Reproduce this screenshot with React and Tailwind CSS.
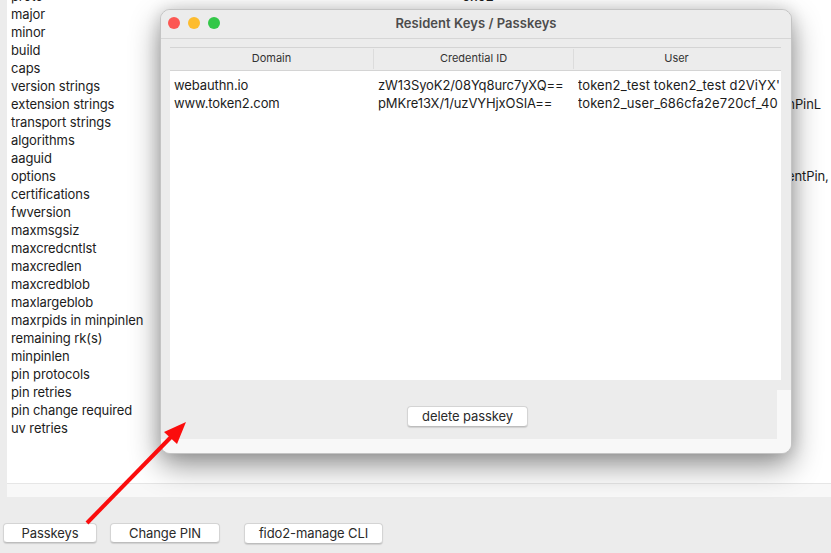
const labels = ["proto","major","minor","build","caps","version strings","extension strings","transport strings","algorithms","aaguid","options","certifications","fwversion","maxmsgsiz","maxcredcntlst","maxcredlen","maxcredblob","maxlargeblob","maxrpids in minpinlen","remaining rk(s)","minpinlen","pin protocols","pin retries","pin change required","uv retries"];

const font = { fontFamily: '"Inter", "Liberation Sans", sans-serif' };

function Btn({ className, children }) {
  return (
    <button className={`flex items-center justify-center bg-white rounded-[4px] border border-[#d4d4d4] border-b-[#bdbdbd] text-[13px] leading-none text-[#2a2a2a] shadow-[0_1px_1px_rgba(0,0,0,0.12)] ${className}`}>
      {children}
    </button>
  );
}

export default function App() {
  return (
    <div className="relative w-[831px] h-[553px] overflow-hidden bg-[#ececec] text-[#1c1c1c] text-[13px] tracking-[-0.1px]" style={font}>
      {/* main window */}
      <div className="flex flex-col h-[497px] ml-[7px]">
        <div className="relative flex-1 bg-white -mt-[13px] pl-[4px] overflow-hidden">
          {labels.map((l) => (
            <div key={l} className="h-[18px] leading-[18px] whitespace-nowrap">{l}</div>
          ))}
          <span className="absolute left-[455px] top-0 h-[18px] leading-[18px] font-medium">0x02</span>
          <span className="absolute left-[766px] top-[108px] h-[18px] leading-[18px]">minPinL</span>
          <span className="absolute left-[780px] top-[180px] h-[18px] leading-[18px]">entPin,</span>
        </div>
        <div className="h-[14px] bg-[#f8f8f8] border-t border-[#e6e6e6]" />
      </div>
      <div className="flex items-start pt-[26px] pl-[3px]">
        <Btn className="w-[94px] h-[20px]">Passkeys</Btn>
        <Btn className="w-[110px] h-[20px] ml-[13px]">Change PIN</Btn>
        <Btn className="w-[139px] h-[21px] ml-[24px]">fido2-manage CLI</Btn>
      </div>

      {/* dialog */}
      <div className="absolute left-[160px] top-[9px] w-[632px] h-[445px] flex flex-col rounded-[10px] bg-[#ececec] border border-[#c4c4c4] overflow-hidden shadow-[0_12px_30px_rgba(0,0,0,0.42),0_0_16px_rgba(0,0,0,0.14)]">
        <div className="relative h-[29px] shrink-0 flex items-center justify-center border-b border-[#d6d6d6] bg-[#ececec]">
          <div className="absolute left-[7px] top-[7px] flex gap-[8px]">
            <span className="w-[12px] h-[12px] rounded-full bg-[#fc5753]" />
            <span className="w-[12px] h-[12px] rounded-full bg-[#fdbc2e]" />
            <span className="w-[12px] h-[12px] rounded-full bg-[#33c748]" />
          </div>
          <span className="text-[13px] font-semibold tracking-[0.05px] text-[#4c4c4c] -mt-[1px]">Resident Keys / Passkeys</span>
        </div>
        <div className="flex flex-col mt-[8px] mx-[9px] w-[611px] h-[333px] shrink-0">
          <div className="flex h-[24px] shrink-0 border-t border-b border-[#d4d4d4] bg-[#ececec] text-[11px] tracking-normal text-[#333] pr-[2px]">
            <div className="w-[204px] flex items-center justify-center border-r border-[#dcdcdc] my-[1px] pb-[2px]">Domain</div>
            <div className="w-[200px] flex items-center justify-center border-r border-[#dcdcdc] my-[1px] pb-[2px]">Credential ID</div>
            <div className="flex-1 flex items-center justify-center pb-[2px]">User</div>
          </div>
          <div className="flex-1 bg-white pt-[5px] pl-[4px] pr-[2px] overflow-hidden">
            {[["webauthn.io","zW13SyoK2/08Yq8urc7yXQ==","token2_test token2_test d2ViYX'"],["www.token2.com","pMKre13X/1/uzVYHjxOSIA==","token2_user_686cfa2e720cf_40"]].map((r) => (
              <div key={r[0]} className="flex h-[18px] leading-[18px]">
                <div className="w-[204px] shrink-0 whitespace-nowrap">{r[0]}</div>
                <div className="w-[200px] shrink-0 whitespace-nowrap">{r[1]}</div>
                <div className="w-[201px] shrink-0 whitespace-nowrap overflow-hidden tracking-[0.12px]">{r[2]}</div>
              </div>
            ))}
          </div>
        </div>
        <div className="flex-1 flex min-h-0">
          <div className="flex-1 flex flex-col">
            <div className="flex-1 flex items-start justify-center pt-[26px] pr-[3px]">
              <Btn className="w-[121px] h-[21px]">delete passkey</Btn>
            </div>
            <div className="h-[14px] bg-[#f8f8f8]" />
          </div>
          <div className="w-[14px] mt-[10px] bg-[#f8f8f8]" />
        </div>
      </div>

      {/* annotation arrow */}
      <svg className="absolute left-0 top-0" width="831" height="553" viewBox="0 0 831 553">
        <line x1="87" y1="523" x2="172" y2="436" stroke="#fb0d0d" strokeWidth="4" />
        <polygon points="186,422 164,432 177,444" fill="#fb0d0d" />
      </svg>
    </div>
  );
}
